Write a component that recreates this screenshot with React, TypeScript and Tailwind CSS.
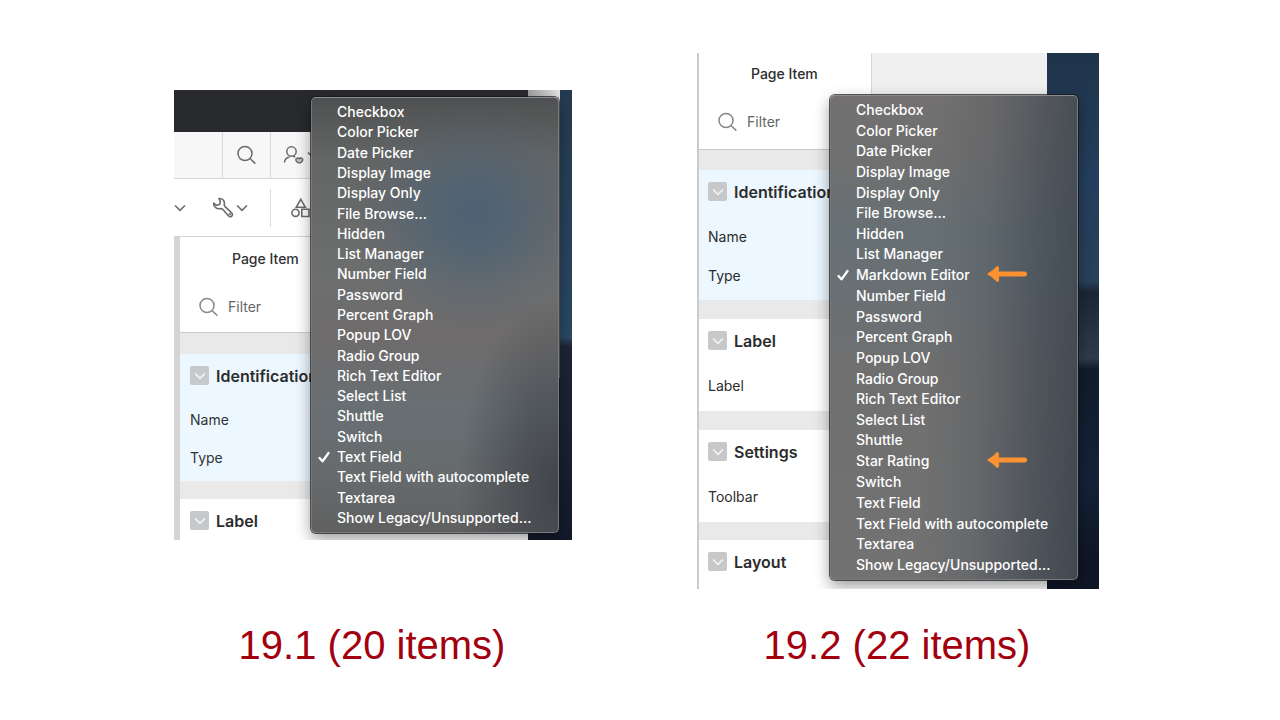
import React from "react";

const menuBefore = [
  "Checkbox", "Color Picker", "Date Picker", "Display Image", "Display Only", "File Browse...", "Hidden",
  "List Manager", "Number Field", "Password", "Percent Graph", "Popup LOV", "Radio Group", "Rich Text Editor",
  "Select List", "Shuttle", "Switch", "Text Field", "Text Field with autocomplete", "Textarea",
  "Show Legacy/Unsupported...",
];

const menuAfter = [
  "Checkbox", "Color Picker", "Date Picker", "Display Image", "Display Only", "File Browse...", "Hidden",
  "List Manager", "Markdown Editor", "Number Field", "Password", "Percent Graph", "Popup LOV", "Radio Group",
  "Rich Text Editor", "Select List", "Shuttle", "Star Rating", "Switch", "Text Field",
  "Text Field with autocomplete", "Textarea", "Show Legacy/Unsupported...",
];

function SearchIcon({ className }: { className: string }) {
  return (
    <svg viewBox="0 0 20 20" className={className} fill="none" stroke="currentColor" strokeWidth="1.5" aria-hidden="true">
      <circle cx="8" cy="8.500" r="7" />
      <path d="M13 13.500 18.300 18.600" />
    </svg>
  );
}

function Chevron({ className }: { className: string }) {
  return (
    <svg viewBox="0 0 12 8" className={className} fill="none" stroke="currentColor" strokeWidth="1.6" aria-hidden="true">
      <path d="M1 1.5 6 6.3 11 1.5" />
    </svg>
  );
}

function UserIcon() {
  return (
    <svg viewBox="0 0 22 20" className="h-5 w-[22px] shrink-0" fill="none" stroke="currentColor" strokeWidth="1.5" aria-hidden="true">
      <path d="M1.500 17.500c0-3.200 1.700-4.900 5-5.600" />
      <circle cx="8.500" cy="6.500" r="4.700" />
      <path d="M10.300 10.900l1.700 1.400" />
      <path d="M13.300 13.500c1-.9 2.200-.6 3 .3.800-.9 2-1.200 3-.3 1.300 1.300-.3 4.500-3 4.500s-4.300-3.200-3-4.500z" fill="#c4c4c4" />
    </svg>
  );
}

function WrenchIcon() {
  return (
    <svg viewBox="0 0 22 22" className="h-[22px] w-[22px]" fill="none" stroke="currentColor" strokeWidth="1.6" strokeLinejoin="round" aria-hidden="true">
      <path d="M7 1.600C10.500 1.200 13 4 12.300 7.300 12.100 8.300 12.400 9 13.100 9.700L19.600 15.800C21.800 18.200 18.800 21.200 16.600 19L10.600 12.300C10 11.600 9.200 11.500 8.200 11.700 4.500 12.300 1.300 9.500 1.700 6L4.500 8.300 7.600 7.500 8.400 4.600z" />
      <circle cx="17.700" cy="17.300" r="0.400" />
    </svg>
  );
}

function ShapesIcon() {
  return (
    <svg viewBox="0 0 20 20" className="h-5 w-5 shrink-0" fill="none" stroke="currentColor" strokeWidth="1.600" aria-hidden="true">
      <path d="M9.800 1.300 14.300 9.200H5.300z" />
      <circle cx="4.500" cy="14.800" r="3.600" />
      <path d="M10.800 11.300h7.200v7.200h-7.200z" />
    </svg>
  );
}

function Arrow() {
  return (
    <svg viewBox="0 0 40 18" className="h-[18px] w-10" fill="#fb9131" stroke="#fb9131" strokeLinecap="round" strokeLinejoin="round" aria-hidden="true">
      <path d="M8 9H37.500" strokeWidth="5" />
      <path d="M1.500 9C5.500 7.500 8 5 10.500 2 12.500 4 10 6.500 10.500 9 10 11.500 12.500 14 10.500 16 8 13 5.500 10.500 1.500 9z" strokeWidth="2" />
    </svg>
  );
}

type MenuProps = { items: string[]; selected: string; marked?: string[]; className: string };

function Menu({ items, selected, marked = [], className }: MenuProps) {
  return (
    <ul
      role="menu"
      className={`absolute grid rounded-[5px] border border-t-[#8b8b8b] border-r-[#77797c] border-b-[#77797c] border-l-[#77797c] py-1 text-sm font-medium text-white shadow-[0_0_0_1px_rgba(20,22,24,0.7),0_6px_16px_rgba(0,0,0,0.4)] ${className}`}
    >
      {items.map((item) => (
        <li key={item} role="none" className="flex min-h-0">
          <button type="button" role="menuitemradio" aria-checked={item === selected} className="flex w-full items-center whitespace-nowrap pl-[5px] text-left leading-5">
            <span className="w-5 shrink-0">
              {item === selected && (
                <svg viewBox="0 0 14 14" className="h-3.5 w-3.5" fill="none" stroke="currentColor" strokeWidth="2.300" strokeLinecap="round" strokeLinejoin="round" aria-hidden="true">
                  <path d="M2.500 8 5.500 11.300 11.500 3" />
                </svg>
              )}
            </span>
            {item}
            {marked.includes(item) && (
              <span className="mr-[50px] mb-[3px] ml-auto">
                <Arrow />
              </span>
            )}
          </button>
        </li>
      ))}
    </ul>
  );
}

function SectionTitle({ children }: { children: string }) {
  return (
    <h2 className="flex h-[43px] items-center gap-[7px] text-base font-semibold text-[#2c2c2c]">
      <button type="button" aria-label={`Collapse ${children}`} className="flex h-[19px] w-[19px] shrink-0 items-center justify-center rounded-xs bg-[#c6c8c9] text-[#f4f4f4]">
        <Chevron className="h-2 w-3" />
      </button>
      {children}
    </h2>
  );
}

function Filter({ id, className }: { id: string; className: string }) {
  return (
    <label htmlFor={id} className={`flex items-center gap-[9px] text-[#888] ${className}`}>
      <SearchIcon className="h-5 w-5 shrink-0" />
      <input id={id} type="text" placeholder="Filter" aria-label="Filter" className="w-20 bg-transparent text-sm text-[#444] outline-none placeholder:text-[#666]" />
    </label>
  );
}

function Before() {
  return (
    <div className="relative flex h-[450px] items-start overflow-hidden bg-[linear-gradient(180deg,#253b50_0%,#2a4964_55%,#1f2434_57%,#1b2033_80%,#121a2b_100%)]">
      <div className="flex h-full w-[354px] flex-col bg-white text-[#6b6b6b]">
        <div className="h-[42px] shrink-0 bg-[#282a2d]" />
        <div className="flex h-[47px] shrink-0 border-b border-[#d8d8d8] bg-[#f7f7f7]">
          <div className="w-[49px] border-r border-[#d8d8d8]" />
          <button type="button" aria-label="Search" className="flex w-12 items-center justify-center border-r border-[#d8d8d8]">
            <SearchIcon className="h-5 w-5" />
          </button>
          <button type="button" aria-label="User" className="flex items-center gap-0.5 pl-3">
            <UserIcon />
            <Chevron className="h-2 w-3" />
          </button>
        </div>
        <div className="flex h-[58px] shrink-0 items-center border-b border-[#d4d4d4]">
          <Chevron className="h-2 w-3" />
          <button type="button" aria-label="Utilities" className="ml-[26px] flex items-center gap-0.5">
            <WrenchIcon />
            <Chevron className="h-2 w-3" />
          </button>
          <div className="ml-[22px] h-[38px] w-px bg-[#ddd]" />
          <button type="button" aria-label="Shared components" className="ml-5">
            <ShapesIcon />
          </button>
        </div>
        <div className="flex-1 border-l-[6px] border-[#d4d4d4] text-sm text-[#333]">
          <div className="flex h-11 items-center pl-[52px] font-medium">Page Item</div>
          <Filter id="filter-before" className="h-[52px] border-b border-[#ccc] pl-[19px]" />
          <div className="h-[21px] bg-[#e9e9e9]" />
          <section className="h-[127px] bg-[#ecf7ff] pl-2.5">
            <SectionTitle>Identification</SectionTitle>
            <div className="mt-1 flex h-[38px] items-center">Name</div>
            <div className="flex h-[38px] items-center">Type</div>
          </section>
          <div className="h-[18px] bg-[#e9e9e9]" />
          <section className="pl-2.5">
            <SectionTitle>Label</SectionTitle>
          </section>
        </div>
      </div>
      <div className="h-72 w-8 bg-[linear-gradient(90deg,#a0a0a0,#e4e4e4)]" />
      <Menu
        items={menuBefore}
        selected="Text Field"
        className="top-[7px] left-[137px] h-[436px] w-[248px] bg-[radial-gradient(ellipse_120px_115px_at_66%_27%,#4d6274_0%,rgba(77,98,116,0.75)_30%,rgba(77,98,116,0.25)_70%,transparent_100%),radial-gradient(ellipse_100px_190px_at_100%_90%,#41454b_0%,rgba(65,69,75,0.6)_45%,transparent_100%),linear-gradient(180deg,#4f5051_0%,#646565_14%,#6d6e6e_42%,#6e6b6b_55%,#686f73_72%,#666a6c_88%,#606060_100%)]"
      />
    </div>
  );
}

function After() {
  return (
    <div className="relative flex h-[536px] overflow-hidden bg-[linear-gradient(178deg,#1e3348_0%,#243f5d_25%,#29415b_44%,#1b2637_46%,#303b4d_58%,#111c2d_60%,#142238_80%,#0f1626_95%)]">
      <div className="w-[350px] border-l-2 border-[#cbcbcb] bg-white text-sm text-[#2c2c2c]">
        <div className="flex h-[97px] border-b border-[#c9c9c9] bg-[#f0f0f0]">
          <div className="w-[173px] border-r border-[#d8d8d8] bg-white">
            <div className="flex h-[41px] items-center pl-[52px] font-medium">Page Item</div>
            <Filter id="filter-after" className="h-14 pl-[19px]" />
          </div>
        </div>
        <div className="h-5 bg-[#e9e9e9]" />
        <section className="h-[130px] bg-[#ecf7ff] pl-[9px]">
          <SectionTitle>Identification</SectionTitle>
          <div className="mt-1 flex h-[39px] items-center">Name</div>
          <div className="flex h-[39px] items-center">Type</div>
        </section>
        <div className="h-[19px] bg-[#e9e9e9]" />
        <section className="h-[92px] pl-[9px]">
          <SectionTitle>Label</SectionTitle>
          <div className="mt-1 flex h-[39px] items-center">Label</div>
        </section>
        <div className="h-[19px] bg-[#e9e9e9]" />
        <section className="h-[92px] pl-[9px]">
          <SectionTitle>Settings</SectionTitle>
          <div className="mt-1 flex h-[39px] items-center">Toolbar</div>
        </section>
        <div className="h-[18px] bg-[#e9e9e9]" />
        <section className="pl-[9px]">
          <SectionTitle>Layout</SectionTitle>
        </section>
      </div>
      <Menu
        items={menuAfter}
        selected="Markdown Editor"
        marked={["Markdown Editor", "Star Rating"]}
        className="top-[42px] left-[133px] h-[485px] w-[248px] bg-[linear-gradient(93deg,transparent_40%,rgba(62,70,80,0.2)_60%,rgba(62,70,80,0.65)_82%,#41484f_100%),linear-gradient(180deg,#727070_0%,#706f6f_12%,#677074_28%,#697074_40%,#6f6f6f_55%,#727272_100%)]"
      />
    </div>
  );
}

export default function App() {
  return (
    <main className="flex min-h-screen flex-wrap justify-center gap-x-[125px] bg-white pt-[53px] pr-[7px] font-['Inter',sans-serif]">
      <figure className="flex w-[398px] flex-col pt-[37px]">
        <Before />
        <figcaption className="mt-[81px] pr-0.5 text-center font-['Liberation_Sans',sans-serif] text-[40px] leading-[48px] text-[#a3000f]">
          19.1 (20 items)
        </figcaption>
      </figure>
      <figure className="flex w-[402px] flex-col">
        <After />
        <figcaption className="mt-8 pr-0.5 text-center font-['Liberation_Sans',sans-serif] text-[40px] leading-[48px] text-[#a3000f]">
          19.2 (22 items)
        </figcaption>
      </figure>
    </main>
  );
}
